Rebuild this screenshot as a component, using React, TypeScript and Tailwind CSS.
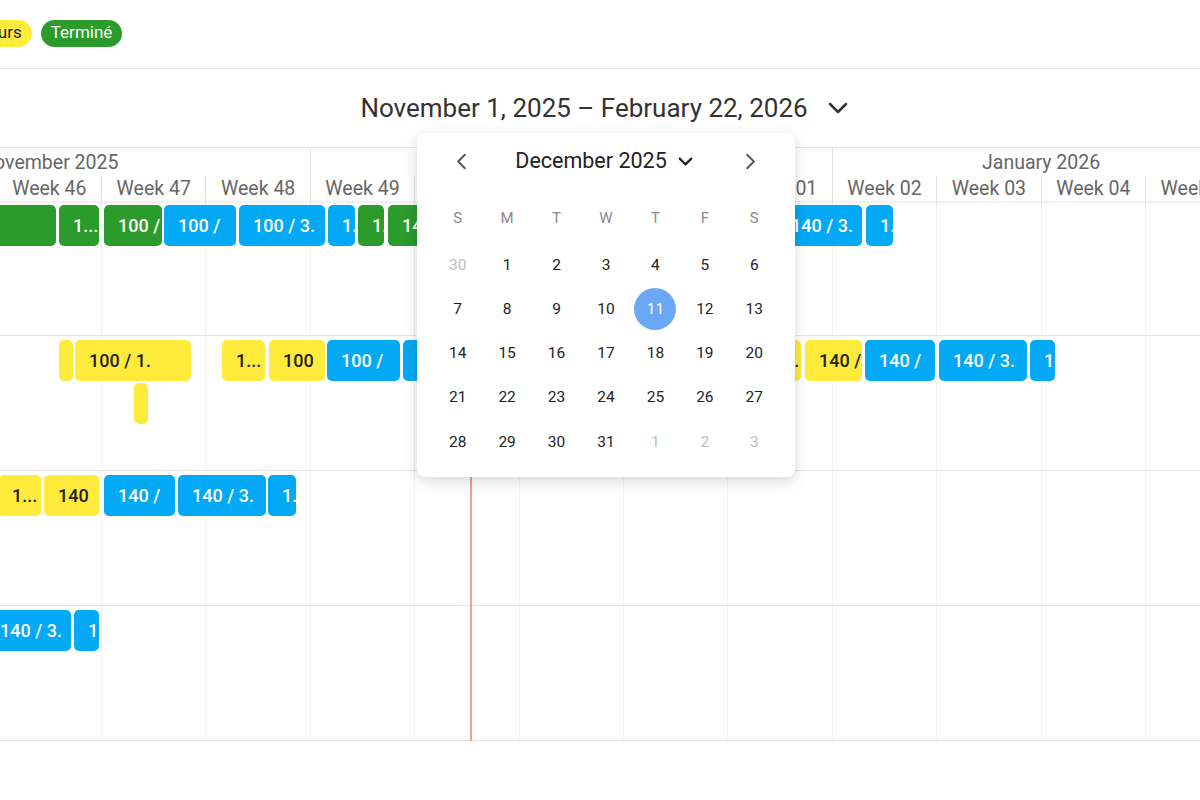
import { ChevronDown, ChevronLeft, ChevronRight } from "lucide-react";

type Bar = {
  x1: number;
  x2: number;
  top?: number;
  tone: "green" | "blue" | "yellow";
  label: string;
};

// page coordinates; the timeline begins at week 44, off screen on the left
const ORIGIN = -211.2;
const WEEK = 104.4;

const months = [
  { label: "November 2025", weeks: ["Week 44", "Week 45", "Week 46", "Week 47", "Week 48"] },
  { label: "December 2025", weeks: ["Week 49", "Week 50", "Week 51", "Week 52", "Week 01"] },
  { label: "January 2026", weeks: ["Week 02", "Week 03", "Week 04", "Week 05"] },
];

const rows: Bar[][] = [
  [
    { x1: -80, x2: 56, tone: "green", label: "" },
    { x1: 59, x2: 99, tone: "green", label: "1..." },
    { x1: 104, x2: 162, tone: "green", label: "100 /" },
    { x1: 164, x2: 236, tone: "blue", label: "100 /" },
    { x1: 239, x2: 325, tone: "blue", label: "100 / 3." },
    { x1: 328, x2: 355, tone: "blue", label: "1." },
    { x1: 358, x2: 384, tone: "green", label: "1." },
    { x1: 388, x2: 460, tone: "green", label: "140 /" },
    { x1: 463, x2: 560, tone: "blue", label: "140 / 3." },
    { x1: 777, x2: 862, tone: "blue", label: "140 / 3." },
    { x1: 866, x2: 893, tone: "blue", label: "1." },
  ],
  [
    { x1: 59, x2: 73, tone: "yellow", label: "" },
    { x1: 75, x2: 191, tone: "yellow", label: "100 / 1." },
    { x1: 134, x2: 148, top: 47, tone: "yellow", label: "" },
    { x1: 222, x2: 265, tone: "yellow", label: "1..." },
    { x1: 269, x2: 325, tone: "yellow", label: "100" },
    { x1: 327, x2: 400, tone: "blue", label: "100 /" },
    { x1: 403, x2: 490, tone: "blue", label: "100 / 3." },
    { x1: 760, x2: 801, tone: "yellow", label: "1..." },
    { x1: 805, x2: 862, tone: "yellow", label: "140 /" },
    { x1: 865, x2: 935, tone: "blue", label: "140 /" },
    { x1: 939, x2: 1027, tone: "blue", label: "140 / 3." },
    { x1: 1030, x2: 1055, tone: "blue", label: "1" },
  ],
  [
    { x1: -2, x2: 41, tone: "yellow", label: "1..." },
    { x1: 44, x2: 99, tone: "yellow", label: "140" },
    { x1: 104, x2: 175, tone: "blue", label: "140 /" },
    { x1: 178, x2: 266, tone: "blue", label: "140 / 3." },
    { x1: 268, x2: 296, tone: "blue", label: "1." },
  ],
  [
    { x1: -14, x2: 71, tone: "blue", label: "140 / 3." },
    { x1: 74, x2: 99, tone: "blue", label: "1" },
  ],
];

const toneClass = {
  green: "bg-[#2b9b2b] text-white",
  blue: "bg-[#03a9f4] text-white",
  yellow: "bg-[#ffeb3b] text-[#222]",
};

const weekdays = ["S", "M", "T", "W", "T", "F", "S"];

const days: { n: number; muted?: boolean }[] = [
  { n: 30, muted: true },
  ...Array.from({ length: 31 }, (_, i) => ({ n: i + 1 })),
  { n: 1, muted: true },
  { n: 2, muted: true },
  { n: 3, muted: true },
];

function DatePopup() {
  return (
    <div className="absolute left-[417px] top-[133px] z-20 h-[344px] w-[378px] rounded-[8px] bg-white px-4 shadow-[0_4px_14px_rgba(0,0,0,0.16)]">
      <div className="mt-[6px] flex h-[44px] items-center justify-between px-2">
        <button className="flex h-[40px] w-[40px] items-center justify-center text-[#555]">
          <ChevronLeft size={27} strokeWidth={1.7} />
        </button>
        <div className="flex items-center gap-[7px] text-[21.5px] text-[#222]">
          <span>December 2025</span>
          <ChevronDown size={23} strokeWidth={2.3} />
        </div>
        <button className="flex h-[40px] w-[40px] items-center justify-center text-[#555]">
          <ChevronRight size={27} strokeWidth={1.7} />
        </button>
      </div>

      <div className="mt-[19px] grid h-[32px] grid-cols-7 items-center text-center text-[15px] text-[#8a8a8a]">
        {weekdays.map((d, i) => (
          <div key={i}>{d}</div>
        ))}
      </div>

      <div className="mt-[9px] grid grid-cols-7">
        {days.map((d, i) => (
          <div key={i} className="flex h-[44.25px] items-center justify-center">
            {d.n === 11 && !d.muted ? (
              <div className="flex h-[42px] w-[42px] items-center justify-center rounded-full bg-[#6aa8f5] text-[15.5px] text-white">
                {d.n}
              </div>
            ) : (
              <span className={d.muted ? "text-[15.5px] text-[#bdbdbd]" : "text-[15.5px] text-[#222]"}>{d.n}</span>
            )}
          </div>
        ))}
      </div>
    </div>
  );
}

export default function App() {
  const totalWeeks = months.reduce((sum, m) => sum + m.weeks.length, 0);

  return (
    <div className="relative h-[800px] w-[1200px] overflow-hidden bg-white font-['Roboto',sans-serif]">
      <div className="flex h-[69px] items-center gap-[9px] border-b border-[#e8e8e8] pb-[2px]">
        <span className="ml-[-54px] flex h-[27px] items-center rounded-full bg-[#ffeb3b] px-[10px] text-[17px] text-[#222]">
          En cours
        </span>
        <span className="flex h-[27px] items-center rounded-full bg-[#2b9b2b] px-[10px] text-[17px] text-white">
          Terminé
        </span>
      </div>

      <div className="flex h-[78px] items-center justify-center gap-[14px] pl-[14px] text-[#333]">
        <span className="text-[26px]">November 1, 2025 – February 22, 2026</span>
        <ChevronDown size={32} strokeWidth={1.9} />
      </div>

      <div className="ml-[-211.2px] w-[1461.6px]">
        <div className="relative z-10 flex h-[54px] border-t border-[#e2e2e2] bg-white shadow-[0_2px_3px_rgba(0,0,0,0.07)]">
          {months.map((m) => (
            <div
              key={m.label}
              className="flex flex-col border-r border-[#e2e2e2]"
              style={{ width: m.weeks.length * WEEK }}
            >
              <div className="flex h-[28px] items-center justify-center pt-[1px] text-[19.5px] text-[#666]">
                {m.label}
              </div>
              <div className="flex h-[25px]">
                {m.weeks.map((w, i) => (
                  <div
                    key={w}
                    className={
                      i === 0
                        ? "flex flex-1 items-center justify-center text-[19.5px] text-[#666]"
                        : "flex flex-1 items-center justify-center border-l border-[#e2e2e2] text-[19.5px] text-[#666]"
                    }
                  >
                    {w}
                  </div>
                ))}
              </div>
            </div>
          ))}
        </div>

        <div className="relative">
          {rows.map((bars, r) => (
            <div key={r} className="relative flex h-[135px] border-b border-[#e4e4e4]">
              {Array.from({ length: totalWeeks }, (_, i) => (
                <div key={i} className="h-full border-r border-[#f1f1f1]" style={{ width: WEEK }} />
              ))}
              {bars.map((b, i) => (
                <div
                  key={i}
                  className={`absolute flex h-[41px] items-center overflow-hidden whitespace-nowrap rounded-[5px] pl-[14px] text-[18px] font-medium ${toneClass[b.tone]}`}
                  style={{ left: b.x1 - ORIGIN, width: b.x2 - b.x1, top: b.top ?? 4 }}
                >
                  {b.label}
                </div>
              ))}
            </div>
          ))}
          <div className="absolute bottom-0 top-0 w-[2px] bg-[#f5a08c]" style={{ left: 470 - ORIGIN }} />
        </div>
      </div>

      <DatePopup />
    </div>
  );
}
